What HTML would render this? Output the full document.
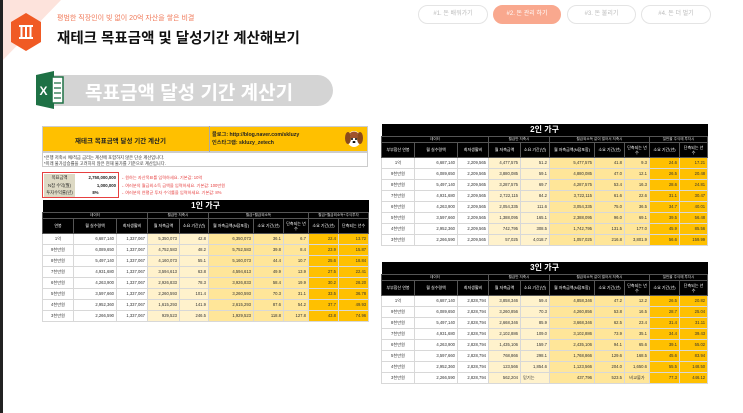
<!DOCTYPE html>
<html><head><meta charset="utf-8"><style>
*{margin:0;padding:0;box-sizing:border-box}
body{width:743px;height:413px;overflow:hidden;background:#fff;position:relative;font-family:"Liberation Sans","Noto Sans CJK KR",sans-serif}
.abs{position:absolute}
.pill{position:absolute;top:5px;height:19px;border:1px solid #e4e4e4;border-radius:10px;font-size:6px;color:#bbb;text-align:center;line-height:17px}
table{border-collapse:collapse;table-layout:fixed;position:absolute;font-size:4.2px;color:#333}
td{border:0.5px solid #d8d8d8;height:11px;text-align:right;padding:0 2px;white-space:nowrap;overflow:hidden}
tr.t td{background:#000;color:#fff;font-size:8px;font-weight:bold;text-align:center;height:12px;border:none}
tr.g td{background:#000;color:#ddd;text-align:center;height:6px;border:0.5px solid #555;font-size:3.6px}
tr.h td{background:#000;color:#fff;text-align:center;height:15px;border:0.5px solid #555;font-size:4px;white-space:normal;line-height:5px}
tr.d td:nth-child(1){text-align:center}
tr.d td:nth-child(4),tr.d td:nth-child(5){background:#fff2cc}
tr.d td:nth-child(6),tr.d td:nth-child(7),tr.d td:nth-child(8){background:#ffe699}
tr.d td:nth-child(9),tr.d td:nth-child(10){background:#ffc000}
</style></head><body>
<div class="abs" style="left:0;top:0;width:3px;height:413px;background:#222"></div>
<div class="abs" style="left:3px;top:0;width:0;height:0;border-top:60px solid #fde3dc;border-right:58px solid transparent"></div>
<svg class="abs" style="left:11px;top:13px" width="30" height="38" viewBox="0 0 30 38"><polygon points="15,0 30,9 30,29 15,38 0,29 0,9" fill="#f05a24"/><rect x="8" y="12" width="14" height="2" fill="#fff"/><rect x="8" y="24" width="14" height="2" fill="#fff"/><rect x="9.5" y="14" width="2" height="10" fill="#fff"/><rect x="14" y="14" width="2" height="10" fill="#fff"/><rect x="18.5" y="14" width="2" height="10" fill="#fff"/></svg>
<div class="abs" style="left:57px;top:13px;font-size:7px;color:#f07a5a">평범한 직장인이 빚 없이 20억 자산을 쌓은 비결</div>
<div class="abs" style="left:57px;top:27px;font-size:14.5px;font-weight:bold;color:#111">재테크 목표금액 및 달성기간 계산해보기</div>
<div class="pill" style="left:418px;width:70px">#1. 돈 배워가기</div>
<div class="pill" style="left:493px;width:68px;background:#f9a88e;border-color:#f9a88e;color:#fff">#2. 돈 관리 하기</div>
<div class="pill" style="left:567px;width:69px">#3. 돈 불리기</div>
<div class="pill" style="left:641px;width:70px">#4. 돈 더 벌기</div>
<div class="abs" style="left:52px;top:75px;width:281px;height:31px;background:#d4d4d4;border-radius:0 16px 16px 0"></div>
<div class="abs" style="left:85px;top:78px;font-size:19px;font-weight:bold;color:#fff">목표금액 달성 기간 계산기</div>
<svg class="abs" style="left:36px;top:71px" width="28" height="38" viewBox="0 0 28 38"><polygon points="0,4 18,0 18,38 0,34" fill="#1e7145"/><rect x="16" y="6" width="11" height="26" fill="#fff" stroke="#1e7145" stroke-width="1.5"/><path d="M18 12h7M18 17h7M18 22h7M18 27h7" stroke="#1e7145" stroke-width="1.3"/><text x="3.5" y="24" font-size="12" fill="#fff" font-family="Liberation Sans" font-weight="bold">X</text></svg>
<div class="abs" style="left:42px;top:126px;width:326px;height:26px;background:#ffc000;border:0.5px solid #ccc"></div>
<div class="abs" style="left:75px;top:135px;font-size:6.5px;font-weight:bold;color:#222">재테크 목표금액 달성 기간 계산기</div>
<div class="abs" style="left:209px;top:126px;width:1px;height:26px;background:#aaa"></div>
<div class="abs" style="left:212px;top:131px;font-size:5.2px;font-weight:bold;color:#222;line-height:8px">블로그: http://blog.naver.com/skluzy<br>인스타그램: skluzy_zetech</div>
<svg class="abs" style="left:345px;top:129px" width="18" height="20" viewBox="0 0 18 20"><ellipse cx="9" cy="10" rx="7" ry="8" fill="#fff"/><ellipse cx="3" cy="9" rx="3" ry="6" fill="#8b4a1c"/><ellipse cx="15" cy="9" rx="3" ry="6" fill="#8b4a1c"/><path d="M5 4Q9 1 13 4L12 9H6Z" fill="#a0522d"/><circle cx="7" cy="10" r="1" fill="#000"/><circle cx="11" cy="10" r="1" fill="#000"/><ellipse cx="9" cy="13" rx="1.5" ry="1" fill="#000"/></svg>
<div class="abs" style="left:42px;top:152px;width:326px;height:15px;border:0.5px solid #ccc;font-size:4.3px;color:#333;padding:2px 1px;line-height:5.5px">*은행 저축시 예/적금 금리는 계산에 포함하지 않은 단순 계산입니다.<br>*미래 물가상승률을 고려하지 않은 현재 물가를 기준으로 계산입니다.</div>
<div class="abs" style="left:42px;top:172px;width:77px;height:26px;border:1px solid #e64040"></div>
<div class="abs" style="left:44px;top:174px;font-size:4.3px;color:#222;line-height:7.5px">
<div style="display:flex"><span style="width:31px;background:#ddd9c4;text-align:center">목표금액</span><span style="width:41px;text-align:right;font-weight:bold">2,750,000,000</span></div>
<div style="display:flex"><span style="width:31px;background:#ddd9c4;text-align:center">N잡 수익(월)</span><span style="width:41px;text-align:right;font-weight:bold">1,000,000</span></div>
<div style="display:flex"><span style="width:31px;background:#ddd9c4;text-align:center">투자수익률(년)</span><span style="width:41px;text-align:center;font-weight:bold">8%</span></div></div>
<div class="abs" style="left:121px;top:174px;font-size:4.2px;color:#e64040;line-height:7.5px">←원하는 자산목표를 입력하세요. 기본값: 10억<br>←여러분의 월급외소득 금액을 입력하세요. 기본값: 100만원<br>←여러분의 연평균 투자 수익률을 입력하세요. 기본값: 8%</div>

<table style="left:42px;top:200px;width:326px">
<colgroup><col style="width:31px"><col style="width:43px"><col style="width:31px"><col style="width:32px"><col style="width:29px"><col style="width:45px"><col style="width:30px"><col style="width:25px"><col style="width:30px"><col style="width:30px"></colgroup>
<tr class="t"><td colspan="10">1인 가구</td></tr>
<tr class="g"><td colspan="3">데이터</td><td colspan="2">월급만 저축시</td><td colspan="3">월급+월급외소득</td><td colspan="2">월급+월급외소득+주식투자</td></tr>
<tr class="h"><td>연봉</td><td>월 실수령액</td><td>최저생활비</td><td>월 저축금액</td><td>소요 기간(년)</td><td>월 저축금액(N잡포함)</td><td>소요 기간(년)</td><td>단축되는 년수</td><td>소요 기간(년)</td><td>단축되는 년수</td></tr>
<tr class="d"><td>1억</td><td>6,687,140</td><td>1,337,067</td><td>5,350,073</td><td>42.8</td><td>6,350,073</td><td>36.1</td><td>6.7</td><td>22.4</td><td>13.72</td></tr>
<tr class="d"><td>9천만원</td><td>6,089,650</td><td>1,337,067</td><td>4,752,583</td><td>48.2</td><td>5,752,583</td><td>39.8</td><td>8.4</td><td>23.9</td><td>15.87</td></tr>
<tr class="d"><td>8천만원</td><td>5,497,140</td><td>1,337,067</td><td>4,160,073</td><td>55.1</td><td>5,160,073</td><td>44.4</td><td>10.7</td><td>25.6</td><td>18.84</td></tr>
<tr class="d"><td>7천만원</td><td>4,931,680</td><td>1,337,067</td><td>3,594,613</td><td>63.8</td><td>4,594,613</td><td>49.9</td><td>13.9</td><td>27.5</td><td>22.41</td></tr>
<tr class="d"><td>6천만원</td><td>4,263,900</td><td>1,337,067</td><td>2,926,833</td><td>78.3</td><td>3,926,833</td><td>58.4</td><td>19.9</td><td>30.2</td><td>28.20</td></tr>
<tr class="d"><td>5천만원</td><td>3,597,660</td><td>1,337,067</td><td>2,260,593</td><td>101.4</td><td>3,260,593</td><td>70.3</td><td>31.1</td><td>33.5</td><td>36.78</td></tr>
<tr class="d"><td>4천만원</td><td>2,952,360</td><td>1,337,067</td><td>1,615,293</td><td>141.9</td><td>2,615,293</td><td>87.6</td><td>54.2</td><td>37.7</td><td>49.93</td></tr>
<tr class="d"><td>3천만원</td><td>2,266,590</td><td>1,337,067</td><td>929,523</td><td>246.5</td><td>1,929,523</td><td>118.8</td><td>127.8</td><td>43.8</td><td>74.96</td></tr>
</table>

<table style="left:381px;top:124px;width:326px">
<colgroup><col style="width:33px"><col style="width:43px"><col style="width:31px"><col style="width:32px"><col style="width:29px"><col style="width:45px"><col style="width:30px"><col style="width:25px"><col style="width:30px"><col style="width:28px"></colgroup>
<tr class="t"><td colspan="10">2인 가구</td></tr>
<tr class="g"><td colspan="3">데이터</td><td colspan="2">월급만 저축시</td><td colspan="3">월급외소득 같이 벌어서 저축시</td><td colspan="2">절반을 주식에 투자시</td></tr>
<tr class="h"><td>부부합산 연봉</td><td>월 실수령액</td><td>최저생활비</td><td>월 저축금액</td><td>소요 기간(년)</td><td>월 저축금액(N잡포함)</td><td>소요 기간(년)</td><td>단축되는 년수</td><td>소요 기간(년)</td><td>단축되는 년수</td></tr>
<tr class="d"><td>1억</td><td>6,687,140</td><td>2,209,565</td><td>4,477,575</td><td>51.2</td><td>5,477,575</td><td>41.8</td><td>9.3</td><td>24.6</td><td>17.21</td></tr>
<tr class="d"><td>9천만원</td><td>6,089,650</td><td>2,209,565</td><td>3,880,085</td><td>59.1</td><td>4,880,085</td><td>47.0</td><td>12.1</td><td>26.5</td><td>20.48</td></tr>
<tr class="d"><td>8천만원</td><td>5,497,140</td><td>2,209,565</td><td>3,287,575</td><td>69.7</td><td>4,287,575</td><td>53.4</td><td>16.3</td><td>28.6</td><td>24.81</td></tr>
<tr class="d"><td>7천만원</td><td>4,931,680</td><td>2,209,565</td><td>2,722,115</td><td>84.2</td><td>3,722,115</td><td>61.6</td><td>22.6</td><td>31.1</td><td>30.47</td></tr>
<tr class="d"><td>6천만원</td><td>4,263,900</td><td>2,209,565</td><td>2,054,335</td><td>111.6</td><td>3,054,335</td><td>75.0</td><td>36.5</td><td>34.7</td><td>40.01</td></tr>
<tr class="d"><td>5천만원</td><td>3,597,660</td><td>2,209,565</td><td>1,388,095</td><td>165.1</td><td>2,388,095</td><td>96.0</td><td>69.1</td><td>39.5</td><td>56.48</td></tr>
<tr class="d"><td>4천만원</td><td>2,952,360</td><td>2,209,565</td><td>742,795</td><td>308.5</td><td>1,742,795</td><td>131.5</td><td>177.0</td><td>45.9</td><td>85.56</td></tr>
<tr class="d"><td>3천만원</td><td>2,266,590</td><td>2,209,565</td><td>57,025</td><td>4,018.7</td><td>1,057,025</td><td>216.8</td><td>3,801.9</td><td>56.6</td><td>159.99</td></tr>
</table>

<table style="left:381px;top:262px;width:326px">
<colgroup><col style="width:33px"><col style="width:43px"><col style="width:31px"><col style="width:32px"><col style="width:29px"><col style="width:45px"><col style="width:30px"><col style="width:25px"><col style="width:30px"><col style="width:28px"></colgroup>
<tr class="t"><td colspan="10">3인 가구</td></tr>
<tr class="g"><td colspan="3">데이터</td><td colspan="2">월급만 저축시</td><td colspan="3">월급외소득 같이 벌어서 저축시</td><td colspan="2">절반을 주식에 투자시</td></tr>
<tr class="h"><td>부부합산 연봉</td><td>월 실수령액</td><td>최저생활비</td><td>월 저축금액</td><td>소요 기간(년)</td><td>월 저축금액(N잡포함)</td><td>소요 기간(년)</td><td>단축되는 년수</td><td>소요 기간(년)</td><td>단축되는 년수</td></tr>
<tr class="d"><td>1억</td><td>6,687,140</td><td>2,828,794</td><td>3,858,346</td><td>59.4</td><td>4,858,346</td><td>47.2</td><td>12.2</td><td>26.5</td><td>20.82</td></tr>
<tr class="d"><td>9천만원</td><td>6,089,650</td><td>2,828,794</td><td>3,260,856</td><td>70.3</td><td>4,260,856</td><td>53.8</td><td>16.5</td><td>28.7</td><td>25.04</td></tr>
<tr class="d"><td>8천만원</td><td>5,497,140</td><td>2,828,794</td><td>2,668,346</td><td>85.9</td><td>3,668,346</td><td>62.5</td><td>23.4</td><td>31.4</td><td>31.11</td></tr>
<tr class="d"><td>7천만원</td><td>4,931,680</td><td>2,828,794</td><td>2,102,886</td><td>109.0</td><td>3,102,886</td><td>73.9</td><td>35.1</td><td>34.4</td><td>39.43</td></tr>
<tr class="d"><td>6천만원</td><td>4,263,900</td><td>2,828,794</td><td>1,435,106</td><td>159.7</td><td>2,435,106</td><td>94.1</td><td>65.6</td><td>39.1</td><td>55.02</td></tr>
<tr class="d"><td>5천만원</td><td>3,597,660</td><td>2,828,794</td><td>768,866</td><td>298.1</td><td>1,768,866</td><td>129.6</td><td>168.5</td><td>45.6</td><td>83.94</td></tr>
<tr class="d"><td>4천만원</td><td>2,952,360</td><td>2,828,794</td><td>123,566</td><td>1,854.6</td><td>1,123,566</td><td>204.0</td><td>1,650.6</td><td>55.5</td><td>148.50</td></tr>
<tr class="d"><td>3천만원</td><td>2,266,590</td><td>2,828,794</td><td>562,204</td><td style="text-align:left">믿기는</td><td>437,796</td><td>523.5</td><td style="text-align:center">비교불가</td><td>77.3</td><td>446.12</td></tr>
</table>
</body></html>
